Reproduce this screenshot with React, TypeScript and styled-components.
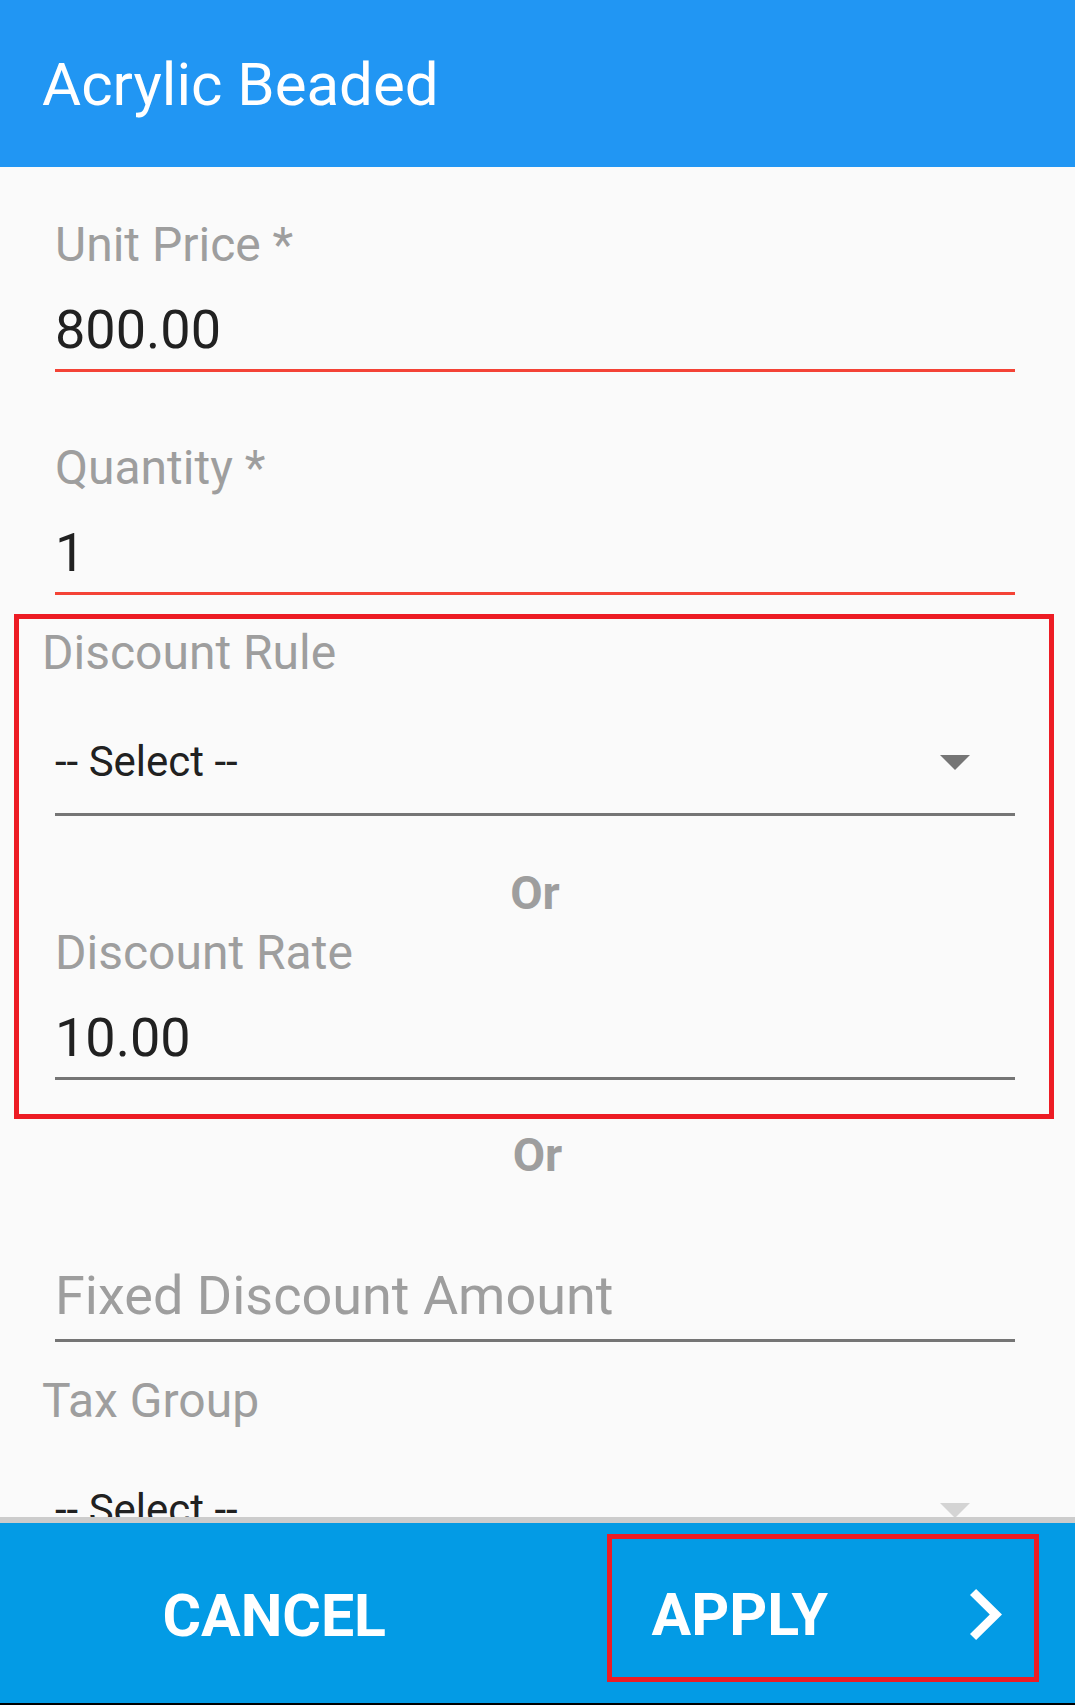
import { useState } from 'react'

import styled, { createGlobalStyle } from 'styled-components'

type iFieldProps = {
  label?: string
  value: string
  placeholder?: string
  required?: boolean
  onChange: (value: string) => void
}

type iSelectProps = {
  label: string
  value: string
  muted?: boolean
}

const TextField = ({ label, value, placeholder, required, onChange }: iFieldProps) => (
  <Field $spaced={!label}>
    {label && <Label>{label}</Label>}
    <Input
      value={value}
      placeholder={placeholder}
      $error={required}
      $tall={!label}
      onChange={(e) => onChange(e.target.value)}
    />
  </Field>
)

const SelectField = ({ label, value, muted }: iSelectProps) => (
  <Field>
    <SpinnerLabel>{label}</SpinnerLabel>
    <Spinner role="button">
      <SpinnerText>{value}</SpinnerText>
      <svg width="30" height="15" viewBox="0 0 30 15">
        <polygon points="0,0 30,0 15,15" fill={muted ? '#d4d4d4' : '#757575'} />
      </svg>
    </Spinner>
  </Field>
)

const App = () => {
  const [unitPrice, setUnitPrice] = useState('800.00')
  const [quantity, setQuantity] = useState('1')
  const [rate, setRate] = useState('10.00')
  const [fixed, setFixed] = useState('')

  return (
    <>
      <GlobalStyle />
      <Screen>
        <Header>
          <Title>Acrylic Beaded</Title>
        </Header>

        <Content>
          <TextField label="Unit Price *" value={unitPrice} required onChange={setUnitPrice} />
          <Gap $size={72} />
          <TextField label="Quantity *" value={quantity} required onChange={setQuantity} />

          <Highlight>
            <SelectField label="Discount Rule" value="-- Select --" />
            <Or $top={53} $bottom={13}>
              Or
            </Or>
            <TextField label="Discount Rate" value={rate} onChange={setRate} />
          </Highlight>

          <Or $top={12} $bottom={0}>
            Or
          </Or>
          <TextField value={fixed} placeholder="Fixed Discount Amount" onChange={setFixed} />
          <Gap $size={35} />
          <SelectField label="Tax Group" value="-- Select --" muted />
        </Content>

        <Footer>
          <FooterButton type="button">CANCEL</FooterButton>
          <ApplyCell>
            <ApplyBox type="button">
              <span>APPLY</span>
              <svg width="32" height="51" viewBox="8.59 6 7.41 12" preserveAspectRatio="none">
                <path d="M10 6L8.59 7.41 13.17 12l-4.58 4.59L10 18l6-6z" fill="#fff" />
              </svg>
            </ApplyBox>
          </ApplyCell>
        </Footer>
      </Screen>
    </>
  )
}

export default App

const GlobalStyle = createGlobalStyle`
  html, body {
    margin: 0;
    padding: 0;
    background: #fafafa;
  }
  * {
    box-sizing: border-box;
  }
  body {
    font-family: Roboto, 'Noto Sans', sans-serif;
  }
`
const Screen = styled.div({
  height: 1705,
  display: 'flex',
  flexDirection: 'column',
  background: '#fafafa',
  overflow: 'hidden'
})
const Header = styled.header({
  height: 167,
  flexShrink: 0,
  background: '#2196f3',
  padding: '55px 0 0 42px'
})
const Title = styled.h1({
  margin: 0,
  fontSize: 60,
  lineHeight: '60px',
  fontWeight: 400,
  color: '#fff'
})
const Content = styled.main({
  flex: 1,
  minHeight: 0,
  overflow: 'hidden',
  paddingTop: 54,
  display: 'flex',
  flexDirection: 'column'
})
const Gap = styled.div<{ $size: number }>`
  height: ${({ $size }) => $size}px;
  flex-shrink: 0;
`
const Field = styled.div<{ $spaced?: boolean }>`
  margin: ${({ $spaced }) => ($spaced ? '90px' : '0')} 60px 0 55px;
  display: flex;
  flex-direction: column;
`
const Label = styled.label({
  fontSize: 48,
  lineHeight: '48px',
  color: '#9e9e9e',
  marginBottom: 33,
  whiteSpace: 'nowrap'
})
const SpinnerLabel = styled(Label)({
  marginLeft: -13,
  marginBottom: 34
})
const Input = styled.input<{ $error?: boolean; $tall?: boolean }>`
  box-sizing: content-box;
  width: 100%;
  height: 54px;
  padding: 0 0 ${({ $tall }) => ($tall ? 17 : 13)}px;
  border: none;
  border-bottom: 3px solid ${({ $error }) => ($error ? '#f44336' : '#757575')};
  background: transparent;
  font-family: inherit;
  font-size: 54px;
  line-height: 54px;
  color: #212121;
  outline: none;

  &::placeholder {
    color: #9e9e9e;
  }
`
const Spinner = styled.div({
  height: 105,
  display: 'flex',
  alignItems: 'center',
  justifyContent: 'space-between',
  paddingRight: 45,
  borderBottom: '3px solid #757575',
  cursor: 'pointer'
})
const SpinnerText = styled.span({
  fontSize: 42,
  lineHeight: '42px',
  color: '#212121'
})
const Or = styled.div<{ $top: number; $bottom: number }>`
  margin: ${({ $top }) => $top}px 0 ${({ $bottom }) => $bottom}px;
  text-align: center;
  font-size: 47px;
  line-height: 47px;
  font-weight: 700;
  color: #9e9e9e;
`
const Highlight = styled.section({
  margin: '19px 21px 0 14px',
  padding: '10px 0 34px',
  border: '5px solid #ed1c24',
  display: 'flex',
  flexDirection: 'column',
  '& > div': {
    marginLeft: 36,
    marginRight: 34
  }
})
const Footer = styled.footer({
  height: 188,
  flexShrink: 0,
  display: 'grid',
  gridTemplateColumns: '1fr 1fr',
  background: '#039be5',
  borderTop: '6px solid #cccccc',
  borderBottom: '2px solid #000'
})
const FooterButton = styled.button({
  border: 'none',
  background: 'transparent',
  color: '#fff',
  fontFamily: 'inherit',
  fontSize: 59,
  lineHeight: '59px',
  fontWeight: 700,
  padding: '4px 0 0 11px',
  cursor: 'pointer'
})
const ApplyCell = styled.div({
  padding: '11px 36px 21px 69px',
  display: 'flex'
})
const ApplyBox = styled.button({
  flex: 1,
  border: '5px solid #ed1c24',
  background: 'transparent',
  display: 'flex',
  alignItems: 'center',
  justifyContent: 'space-between',
  padding: '12px 32px 0 40px',
  color: '#fff',
  fontFamily: 'inherit',
  fontSize: 59,
  lineHeight: '59px',
  fontWeight: 700,
  cursor: 'pointer'
})
